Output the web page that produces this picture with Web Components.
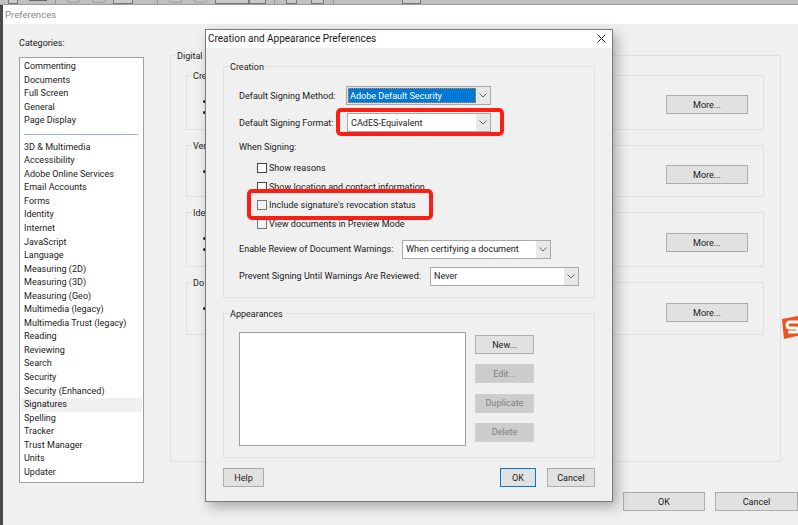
<!DOCTYPE html>
<html>
<head>
<meta charset="utf-8">
<title>Preferences</title>
<style>
  html, body { margin: 0; height: 100%; }
  body {
    position: relative;
    width: 798px;
    height: 525px;
    overflow: hidden;
    background: #4a4a4a;
    font: 9.05px Roboto, "Liberation Sans", sans-serif;
    color: #1a1a1a;
  }
</style>
</head>
<body>
<app-toolbar></app-toolbar>
<pref-window></pref-window>
<appearance-dialog></appearance-dialog>
<red-mark style="left:336px;top:108px;width:168px;height:28px"></red-mark>
<red-mark style="left:247px;top:189px;width:186px;height:31px"></red-mark>
<sogou-badge></sogou-badge>

<script>
// shared button
class XBtn extends HTMLElement {
  constructor() {
    super();
    this.attachShadow({ mode: "open" }).innerHTML = `
      <style>
        :host { display: flex; align-items: center; justify-content: center; box-sizing: border-box;
          height: 19px; background: #e1e1e1; border: 1px solid #adadad; color: #1a1a1a; }
        :host([disabled]) { background: #cccccc; border-color: #d0d0d0; color: #808080; }
        :host([focus]) { border-color: #0078d7; border-width: 1.5px; }
      </style>
      <slot></slot>`;
  }
}
customElements.define("x-btn", XBtn);

// group box, label sits on the top border
class XGroup extends HTMLElement {
  constructor() {
    super();
    this.attachShadow({ mode: "open" }).innerHTML = `
      <style>
        :host { display: block; box-sizing: border-box; position: relative; border: 1px solid #e0e0e0; }
        .label { position: absolute; left: 5px; top: -6px; line-height: 13px; padding: 0 1px; background: #f0f0f0; white-space: nowrap; }
      </style>
      <div class="label"><slot name="label"></slot></div>
      <slot></slot>`;
  }
}
customElements.define("x-group", XGroup);

class XSelect extends HTMLElement {
  constructor() {
    super();
    this.attachShadow({ mode: "open" }).innerHTML = `
      <style>
        :host { display: flex; box-sizing: border-box; height: 19px; border: 1px solid #a9a9a9; background: #fff; padding: 1px; }
        .val { flex: 1; display: flex; align-items: center; padding-left: 2px; white-space: nowrap; overflow: hidden; }
        :host([active]) .val { background: #0078d7; color: #fff; outline: 1px dotted #e08a2c; outline-offset: -1px; }
        :host([active]) { background: #e1e1e1; }
        .arrow { width: 14px; display: flex; align-items: center; justify-content: center; background: #e8e8e8; margin: -1px; margin-left: 0; }
      </style>
      <div class="val"><slot></slot></div>
      <div class="arrow"><svg width="8" height="5" viewBox="0 0 8 5"><path d="M.5.5 4 4 7.5.5" fill="none" stroke="#666" stroke-width="1"/></svg></div>`;
  }
}
customElements.define("x-select", XSelect);

class XCheck extends HTMLElement {
  constructor() {
    super();
    this.attachShadow({ mode: "open" }).innerHTML = `
      <style>
        :host { display: flex; align-items: center; gap: 2px; height: 19px; white-space: nowrap; }
        .box { width: 10px; height: 10px; box-sizing: border-box; border: 1px solid #444; background: #fff; }
        :host([dim]) .box { border-color: #777; background: #f4f4f4; }
      </style>
      <div class="box"></div><slot></slot>`;
  }
}
customElements.define("x-check", XCheck);

// only the bottom edge of the app toolbar shows above the window
class AppToolbar extends HTMLElement {
  constructor() {
    super();
    this.attachShadow({ mode: "open" }).innerHTML = `
      <style>
        :host { display: flex; align-items: flex-start; position: absolute; left: 0; top: 0; width: 798px; height: 5px; box-sizing: border-box;
          background: #bfbfbf; border-bottom: 1px solid #9c9c9c; }
        i { display: block; flex: none; box-sizing: border-box; height: 4px; }
        .box { border: 1px solid #777; border-top: 0; background: #c9c9c9; }
        .bar { background: #666; height: 1px; }
        .sep { width: 1px; background: #949494; }
        .round { border: 1px solid #a2a2a2; border-top: 0; border-radius: 0 0 6px 6px; height: 3px; }
      </style>
      <i class="box" style="width:10px;margin-left:8px"></i>
      <i class="bar" style="width:18px;margin-left:11px"></i>
      <i class="sep" style="margin-left:8px"></i>
      <i class="round" style="width:13px;margin-left:11px"></i>
      <i class="round" style="width:13px;margin-left:12px"></i>
      <i class="box" style="width:20px;margin-left:8px"></i>
      <i class="sep" style="margin-left:24px"></i>
      <i class="round" style="width:13px;margin-left:11px"></i>
      <i class="round" style="width:13px;margin-left:12px"></i>
      <i class="box" style="width:34px;margin-left:8px"></i>
      <i class="box" style="width:17px"></i>
      <i class="sep" style="margin-left:8px"></i>
      <i class="box" style="width:11px;margin-left:11px"></i>
      <i class="box" style="width:13px;margin-left:14px"></i>
      <i class="sep" style="margin-left:9px"></i>
      <i class="box" style="width:19px;margin-left:68px"></i>`;
  }
}
customElements.define("app-toolbar", AppToolbar);

class CatList extends HTMLElement {
  constructor() {
    super();
    const first = ["Commenting", "Documents", "Full Screen", "General", "Page Display"];
    const rest = ["3D & Multimedia", "Accessibility", "Adobe Online Services", "Email Accounts", "Forms", "Identity", "Internet", "JavaScript", "Language", "Measuring (2D)", "Measuring (3D)", "Measuring (Geo)", "Multimedia (legacy)", "Multimedia Trust (legacy)", "Reading", "Reviewing", "Search", "Security", "Security (Enhanced)", "Signatures", "Spelling", "Tracker", "Trust Manager", "Units", "Updater"];
    const row = n => `<div class="row${n === "Signatures" ? " sel" : ""}">${n.replace("&", "&amp;")}</div>`;
    this.attachShadow({ mode: "open" }).innerHTML = `
      <style>
        :host { display: block; }
        .cap { line-height: 14px; margin-bottom: 7px; }
        .box { box-sizing: border-box; width: 125px; height: 426px; background: #fff; border: 1px solid #a0a0a0; padding: 2px 1px; }
        .row { height: 13.56px; line-height: 13.56px; padding-left: 3px; white-space: nowrap; }
        .sel { background: #f0f0f0; }
        .sep { height: 1px; background: #8db9e2; margin: 6px 4px 6px 3px; }
      </style>
      <div class="cap">Categories:</div>
      <div class="box">${first.map(row).join("")}<div class="sep"></div>${rest.map(row).join("")}</div>`;
  }
}
customElements.define("cat-list", CatList);

class PrefWindow extends HTMLElement {
  constructor() {
    super();
    const sub = (label, h, top, dots) => `
      <x-group class="g" style="height:${h}px"><span slot="label">${label}</span>
        <div class="sub"><div class="dots">${"<i></i>".repeat(dots)}</div><x-btn class="more" style="margin-top:${top}px">More...</x-btn></div>
      </x-group>`;
    this.attachShadow({ mode: "open" }).innerHTML = `
      <style>
        :host { display: flex; flex-direction: column; position: absolute; left: 3px; top: 5px; width: 795px; height: 520px; background: #f0f0f0; }
        .title { height: 19px; background: #fff; color: #8a8a8a; line-height: 19px; padding-left: 2px; flex: none; font-size: 9.6px; }
        .body { flex: 1; display: flex; padding: 12px 0 0 16px; }
        .right { margin-left: 26px; margin-top: 19px; width: 611px; }
        .digital { height: 407px; padding: 19px 16px 0 15px; box-sizing: border-box; display: flex; flex-direction: column; gap: 15px; }
        .sub { display: flex; align-items: flex-start; height: 100%; }
        .dots { margin-left: 16px; padding-top: 23.5px; display: flex; flex-direction: column; gap: 8.5px; }
        .dots i { display: block; width: 3px; height: 3px; border-radius: 50%; background: #222; }
        .more { width: 82px; margin-left: auto; margin-right: 15px; }
        .bottom { position: absolute; right: 0; top: 487px; display: flex; gap: 10px; }
        .bottom x-btn { width: 82px; }
      </style>
      <div class="title">Preferences</div>
      <div class="body">
        <cat-list></cat-list>
        <div class="right">
          <x-group class="digital"><span slot="label">Digital S</span>
            ${sub("Cre", 55, 19, 2)}
            ${sub("Ver", 52, 19, 1)}
            ${sub("Ide", 55, 20, 2)}
            ${sub("Do", 53, 20, 1)}
          </x-group>
        </div>
      </div>
      <div class="bottom"><x-btn>OK</x-btn><x-btn style="width:83px">Cancel</x-btn></div>`;
  }
}
customElements.define("pref-window", PrefWindow);

class AppearanceDialog extends HTMLElement {
  constructor() {
    super();
    this.attachShadow({ mode: "open" }).innerHTML = `
      <style>
        :host { display: flex; flex-direction: column; box-sizing: border-box; position: absolute; left: 205px; top: 29px; width: 408px; height: 473px;
          background: #f0f0f0; border: 1px solid #7a7a7a; box-shadow: 4px 5px 12px rgba(0,0,0,.3); }
        .title { flex: none; height: 18px; box-sizing: border-box; padding: 0 6px 2px 2px; background: #fff; display: flex; align-items: center; justify-content: space-between; font-size: 10px; }
        .content { flex: 1; padding: 18px 17px 0 17px; }
        .creation { height: 232px; padding: 19px 15px 0 15px; box-sizing: border-box; }
        .row { display: flex; align-items: center; height: 19px; white-space: nowrap; }
        .row.mt { margin-top: 8px; }
        .lead { line-height: 13px; margin-top: 8.5px; }
        .checks { padding-left: 18px; margin-top: 5px; }
        .checks x-check { height: 18.7px; }
        .appear { height: 145px; margin-top: 15px; padding: 18px 0 0 15px; box-sizing: border-box; display: flex; }
        .list { width: 227px; height: 114px; box-sizing: border-box; background: #fff; border: 1px solid #a0a0a0; }
        .side { margin: 3px 0 0 9px; display: flex; flex-direction: column; gap: 10.3px; width: 59px; }
        .foot { display: flex; margin-top: 10px; }
        .foot .gap { flex: 1; }
      </style>
      <div class="title"><span>Creation and Appearance Preferences</span>
        <svg width="9" height="9" viewBox="0 0 9 9"><path d="M.5.5l8 8M8.5.5l-8 8" stroke="#222" stroke-width="1"/></svg></div>
      <div class="content">
        <x-group class="creation"><span slot="label">Creation</span>
          <div class="row"><span style="width:107px">Default Signing Method:</span><x-select active style="width:145px">Adobe Default Security</x-select></div>
          <div class="row mt"><span style="width:108px">Default Signing Format:</span><x-select style="width:144px">CAdES-Equivalent</x-select></div>
          <div class="lead">When Signing:</div>
          <div class="checks">
            <x-check>Show reasons</x-check>
            <x-check>Show location and contact information</x-check>
            <x-check dim>Include signature's revocation status</x-check>
            <x-check dim>View documents in Preview Mode</x-check>
          </div>
          <div class="row" style="margin-top:6.5px"><span style="width:163px">Enable Review of Document Warnings:</span><x-select style="width:149px">When certifying a document</x-select></div>
          <div class="row mt"><span style="width:191px">Prevent Signing Until Warnings Are Reviewed:</span><x-select style="width:149px">Never</x-select></div>
        </x-group>
        <x-group class="appear"><span slot="label">Appearances</span>
          <div class="list"></div>
          <div class="side">
            <x-btn>New...</x-btn>
            <x-btn disabled>Edit...</x-btn>
            <x-btn disabled>Duplicate</x-btn>
            <x-btn disabled>Delete</x-btn>
          </div>
        </x-group>
        <div class="foot">
          <x-btn style="width:41px">Help</x-btn><div class="gap"></div>
          <x-btn focus style="width:36px">OK</x-btn>
          <x-btn style="width:48px;margin-left:11px">Cancel</x-btn>
        </div>
      </div>`;
  }
}
customElements.define("appearance-dialog", AppearanceDialog);

// red annotation drawn over the screenshot
class RedMark extends HTMLElement {
  constructor() {
    super();
    this.attachShadow({ mode: "open" }).innerHTML = `
      <style>
        :host { display: block; position: absolute; box-sizing: border-box; border: 4px solid #fa1e14; border-radius: 5px; }
      </style>`;
  }
}
customElements.define("red-mark", RedMark);

class SogouBadge extends HTMLElement {
  constructor() {
    super();
    this.attachShadow({ mode: "open" }).innerHTML = `
      <style>
        :host { display: block; position: absolute; left: 781px; top: 315px; width: 17px; height: 24px; overflow: hidden; }
      </style>
      <svg width="24" height="24" viewBox="0 0 24 24">
        <path d="M1 4 22 0l2 19-21 5z" fill="#f0501e"/>
        <path d="M18 7H9Q6 7 6 10t3 3h6q2 0 2 2t-2 2H7" fill="none" stroke="#fff" stroke-width="3"/>
      </svg>`;
  }
}
customElements.define("sogou-badge", SogouBadge);
</script>
</body>
</html>
